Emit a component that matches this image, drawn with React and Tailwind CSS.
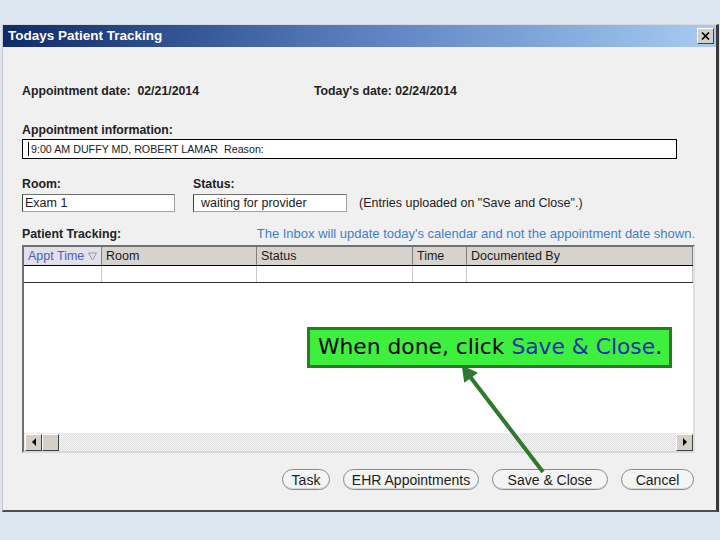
import React from "react";

const headCols = [
  { label: "Appt Time", w: "w-[78px]", sort: true },
  { label: "Room", w: "w-[155px]" },
  { label: "Status", w: "w-[156px]" },
  { label: "Time", w: "w-[54px]" },
  { label: "Documented By", w: "flex-1" },
];

const PillButton = ({ children, w }) => (
  <button
    type="button"
    className={`${w} h-[21px] rounded-full border border-[#8a8a8a] bg-[#f4f4f4] text-[14px] text-[#222] leading-none shadow-[inset_0_-1px_0_#d8d8d8]`}
  >
    {children}
  </button>
);

const ScrollBtn = ({ dir }) => (
  <div className="w-[17px] h-[17px] bg-[#d4d0c8] border border-t-white border-l-white border-r-[#404040] border-b-[#404040] flex items-center justify-center">
    <svg width="6" height="8" viewBox="0 0 6 8">
      {dir === "left" ? <path d="M5 0 L1 4 L5 8 Z" fill="#000" /> : <path d="M1 0 L5 4 L1 8 Z" fill="#000" />}
    </svg>
  </div>
);

export default function App() {
  return (
    <div
      className="relative w-[720px] h-[540px] bg-[#dce6f0] pt-[24px] pl-[2px] overflow-hidden"
      style={{ fontFamily: "'Liberation Sans', Arial, sans-serif" }}
    >
      {/* window */}
      <div className="w-[717px] h-[488px] flex flex-col bg-[#f0f0f0] border-l border-l-[#c8c8c8] border-t border-t-[#d8d8d8] border-r-[3px] border-r-[#3a3a3a] border-b-2 border-b-[#505050]">
        <div className="h-[22px] flex items-center justify-between pl-[5px] pr-[2px] bg-gradient-to-r from-[#0f2a6b] via-[#5b7fbf] to-[#a8ccf2]">
          <span className="text-white text-[13.5px] font-bold">Todays Patient Tracking</span>
          <div className="w-[17px] h-[16px] bg-[#d4d0c8] border border-t-white border-l-white border-r-[#404040] border-b-[#404040] flex items-center justify-center">
            <svg width="9" height="8" viewBox="0 0 9 8">
              <path d="M1 0.5 L8 7.5 M8 0.5 L1 7.5" stroke="#000" strokeWidth="1.6" />
            </svg>
          </div>
        </div>

        <div className="flex-1 flex flex-col pl-[19px] pr-[22px] text-[12.5px] text-[#222]">
          <div className="flex mt-[36px] h-[16px] items-center font-bold text-[12.3px]">
            <span className="w-[292px]">Appointment date:&nbsp; 02/21/2014</span>
            <span>Today's date: 02/24/2014</span>
          </div>

          <div className="mt-[23px] h-[16px] flex items-center font-bold text-[12.3px]">Appointment information:</div>
          <div className="mt-[1px] h-[20px] w-[655px] bg-white border border-black flex items-center pl-[5px] text-[10.7px]">
            <span className="border-l border-black pl-[2px] leading-[14px]">9:00 AM DUFFY MD, ROBERT LAMAR&nbsp; Reason:</span>
          </div>

          <div className="flex mt-[17px]">
            <div className="w-[171px] flex flex-col">
              <span className="h-[16px] flex items-center font-bold text-[12.3px]">Room:</span>
              <div className="mt-[2px] h-[18px] w-[153px] bg-white border border-[#a0a0a0] border-l-[#404040] border-t-[#707070] flex items-center pl-[2px]">
                Exam 1
              </div>
            </div>
            <div className="flex flex-col">
              <span className="h-[16px] flex items-center font-bold text-[12.3px]">Status:</span>
              <div className="mt-[2px] h-[18px] w-[154px] bg-white border border-[#a0a0a0] border-l-[#404040] border-t-[#707070] flex items-center pl-[7px]">
                waiting for provider
              </div>
            </div>
            <div className="mt-[18px] h-[18px] ml-[12px] flex items-center">(Entries uploaded on "Save and Close".)</div>
          </div>

          <div className="mt-[14px] h-[16px] flex items-center justify-between">
            <span className="font-bold text-[12.3px]">Patient Tracking:</span>
            <span className="text-[#3f7fcc] text-[13px] mr-[-1px]">The Inbox will update today's calendar and not the appointment date shown.</span>
          </div>

          <div className="mt-[3px] w-[673px] h-[208px] flex flex-col bg-white border-2 border-t-[#707070] border-l-[#707070] border-r-[#e0e0e0] border-b-[#d8d8d8]">
            <div className="h-[19px] flex bg-[#d6d3ce] border-b border-black">
              {headCols.map((c) => (
                <div
                  key={c.label}
                  className={`${c.w} flex items-center justify-between px-[4px] border-r border-[#808080] ${c.sort ? "bg-[#e2e0ea] text-[#4a5ec4]" : "text-[#1a1a1a]"}`}
                >
                  <span>{c.label}</span>
                  {c.sort && (
                    <svg width="9" height="9" viewBox="0 0 9 9">
                      <path d="M0.5 1 L8.5 1 L4.5 8 Z" fill="none" stroke="#9a9a9a" />
                    </svg>
                  )}
                </div>
              ))}
            </div>
            <div className="h-[17px] flex border-b border-[#333]">
              {headCols.map((c) => (
                <div key={c.label} className={`${c.w} border-r border-[#c8c8c8]`} />
              ))}
            </div>
            <div className="flex-1" />
            <div className="h-[18px] flex items-center pl-[1px] bg-[repeating-conic-gradient(#dcdcdc_0_25%,#f8f8f8_0_50%)] bg-[length:2px_2px]">
              <ScrollBtn dir="left" />
              <div className="w-[17px] h-[17px] bg-[#d4d0c8] border border-t-white border-l-white border-r-[#404040] border-b-[#404040]" />
              <div className="flex-1" />
              <ScrollBtn dir="right" />
            </div>
          </div>

          <div className="mt-[16px] flex justify-end gap-[13px] pr-[0px]">
            <PillButton w="w-[48px]">Task</PillButton>
            <PillButton w="w-[136px]">EHR Appointments</PillButton>
            <PillButton w="w-[116px]">Save &amp; Close</PillButton>
            <PillButton w="w-[73px]">Cancel</PillButton>
          </div>
        </div>
      </div>

      {/* callout overlay */}
      <div
        className="absolute left-[307px] top-[327px] w-[365px] h-[41px] bg-[#3ef03e] border-[3px] border-[#2a7a2a] flex items-center pl-[8px] text-[21.8px] text-black"
        style={{ fontFamily: "'DejaVu Sans', sans-serif" }}
      >
        When done, click&nbsp;<span className="text-[#1030a8]">Save &amp; Close</span>.
      </div>
      <svg className="absolute left-0 top-0 pointer-events-none" width="720" height="540">
        <line x1="543" y1="472" x2="468" y2="374" stroke="#2d7a2d" strokeWidth="4" />
        <path d="M463 367 L476 373 L465 381 Z" fill="#2d7a2d" stroke="#2d7a2d" strokeWidth="2" />
      </svg>
    </div>
  );
}
